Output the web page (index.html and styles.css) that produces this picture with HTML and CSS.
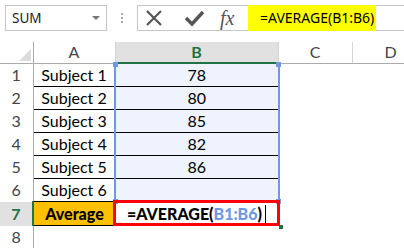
FILE: index.html
```html
<!DOCTYPE html>
<html lang="en">
<head>
    <meta charset="UTF-8">
    <title>Average formula</title>
    <link rel="stylesheet" href="styles.css">
</head>
<body>
    <div class="formula-bar">
        <div class="name-box">
            <span>SUM</span>
            <span class="drop"></span>
        </div>
        <div class="dots">
            <span></span><span></span><span></span>
        </div>
        <div class="edit-box">
            <div class="btns">
                <svg width="22" height="18" viewBox="0 0 22 18">
                    <path d="M4 2 L18 16 M18 2 L4 16" stroke="#555" stroke-width="2.2" fill="none"/>
                </svg>
                <svg width="22" height="18" viewBox="0 0 22 18">
                    <path d="M3 9 L9 15 L20 3" stroke="#555" stroke-width="3.4" fill="none"/>
                </svg>
                <span class="fx"><i>fx</i></span>
            </div>
            <div class="input"><span class="hl">=AVERAGE(B1:B6)</span></div>
        </div>
    </div>

    <div class="sheet">
        <table class="grid">
            <colgroup>
                <col class="c-hd">
                <col class="c-a">
                <col class="c-b">
                <col class="c-c">
                <col class="c-d">
            </colgroup>
            <tr class="col-heads">
                <th class="corner"><span class="tri"></span></th>
                <th>A</th>
                <th class="active-col">B</th>
                <th>C</th>
                <th class="cut">D</th>
            </tr>
            <tr><th class="rh">1</th><td class="lbl">Subject 1</td><td class="num">78</td><td></td><td></td></tr>
            <tr><th class="rh">2</th><td class="lbl">Subject 2</td><td class="num">80</td><td></td><td></td></tr>
            <tr><th class="rh">3</th><td class="lbl">Subject 3</td><td class="num">85</td><td></td><td></td></tr>
            <tr><th class="rh">4</th><td class="lbl">Subject 4</td><td class="num">82</td><td></td><td></td></tr>
            <tr><th class="rh">5</th><td class="lbl">Subject 5</td><td class="num">86</td><td></td><td></td></tr>
            <tr><th class="rh">6</th><td class="lbl">Subject 6</td><td class="num"></td><td></td><td></td></tr>
            <tr class="total">
                <th class="rh active-row">7</th>
                <td class="lbl avg">Average</td>
                <td class="edit">=AVERAGE(<span class="ref">B1:B6</span>)<span class="caret"></span></td>
                <td></td><td></td>
            </tr>
            <tr class="empty"><th class="rh">8</th><td></td><td></td><td></td><td></td></tr>
        </table>

        <div class="range">
            <span class="knob tl"></span>
            <span class="knob tr"></span>
            <span class="knob bl"></span>
            <span class="knob br"></span>
        </div>
        <div class="active-cell"><span class="fill"></span></div>
    </div>
</body>
</html>
```

FILE: styles.css
```css
body {
    margin: 0;
    width: 404px;
    height: 250px;
    overflow: hidden;
    background: #fff;
    font-family: Lato, "Open Sans", sans-serif;
    color: #000;
}
.formula-bar {
    display: flex;
    align-items: center;
    height: 26px;
    padding: 5px 0 0 5px;
}
.name-box {
    box-sizing: border-box;
    width: 102px;
    height: 26px;
    border: 1px solid #c6c6c6;
    display: flex;
    align-items: center;
    justify-content: space-between;
    padding: 0 6px 0 6px;
    font-family: "Noto Sans", sans-serif;
    font-size: 13.5px;
    color: #222;
}
.drop {
    width: 0;
    height: 0;
    border-left: 4px solid transparent;
    border-right: 4px solid transparent;
    border-top: 4px solid #777;
}
.dots {
    width: 30px;
    display: flex;
    flex-direction: column;
    align-items: center;
    gap: 2px;
}
.dots span {
    width: 2px;
    height: 2px;
    background: #aaa;
}
.edit-box {
    flex: 1;
    display: flex;
    height: 26px;
    box-sizing: border-box;
    border: 1px solid #c6c6c6;
    border-right: none;
}
.btns {
    width: 105px;
    display: flex;
    align-items: center;
    gap: 18px;
    padding-left: 5px;
}
.fx {
    font-family: "Liberation Serif", serif;
    font-size: 20px;
    color: #555;
    margin-left: -3px;
}
.input {
    display: flex;
}
.hl {
    background: #ffff00;
    width: 128px;
    margin: -1px 0;
    padding-left: 12px;
    box-sizing: border-box;
    line-height: 26px;
    font-family: "Noto Sans", sans-serif;
    font-size: 14px;
    white-space: nowrap;
}
.sheet {
    position: relative;
    margin-top: 11px;
}
.grid {
    border-collapse: collapse;
    table-layout: fixed;
    width: 404px;
}
.c-hd { width: 33px; }
.c-a { width: 82px; }
.c-b { width: 163px; }
.c-c { width: 74px; }
.c-d { width: 52px; }
.grid th,
.grid td {
    padding: 0;
    height: 22px;
    text-align: center;
    font-weight: normal;
    font-size: 16px;
    line-height: 22px;
}
.col-heads th {
    height: 20px;
    line-height: 20px;
    color: #444;
    border-bottom: 1px solid #ababab;
    border-right: 1px solid #d4d4d4;
}
.grid .col-heads th.cut {
    text-align: left;
    padding-left: 32px;
    border-right: none;
}
.col-heads th.corner {
    position: relative;
    border-right: 1px solid #ababab;
}
.tri {
    position: absolute;
    right: 2px;
    bottom: 2px;
    width: 0;
    height: 0;
    border-left: 12px solid transparent;
    border-bottom: 12px solid #dcdcdc;
}
.col-heads th.active-col {
    background: #e1e1e1;
    color: #217346;
    font-weight: bold;
    border-bottom: 2px solid #217346;
}
.rh {
    color: #444;
    border-right: 1px solid #ababab;
}
.rh.active-row {
    background: #e1e1e1;
    color: #217346;
    font-weight: bold;
    border-right: 2px solid #217346;
}
.lbl,
.num {
    border-bottom: 1px solid #000;
}
.num {
    background: #eff3fd;
    border-left: 1px solid #000;
}
.grid .avg {
    background: #ffc000;
    font-weight: 900;
    height: 23px;
}
.grid .edit {
    font-weight: 900;
    font-size: 16px;
    border-bottom: 1px solid #000;
    white-space: nowrap;
}
.ref {
    color: #6f98e5;
}
.caret {
    display: inline-block;
    width: 1px;
    height: 18px;
    background: #000;
    vertical-align: -3px;
    margin-left: 3px;
}
.range {
    position: absolute;
    left: 114px;
    top: 20px;
    width: 162px;
    height: 138px;
    border-left: 2px solid #6f98e5;
    border-right: 2px solid #6f98e5;
}
.knob {
    position: absolute;
    width: 5px;
    height: 5px;
    background: #6f98e5;
}
.knob.tl { left: -3px; top: 0; }
.knob.tr { right: -3px; top: 0; }
.knob.bl { left: -3px; bottom: -4px; }
.knob.br { right: -3px; bottom: -4px; }
.active-cell {
    position: absolute;
    left: 113px;
    top: 158px;
    width: 161px;
    height: 20px;
    border: 3px solid #ff0000;
}
.fill {
    position: absolute;
    right: -6px;
    bottom: -6px;
    width: 4px;
    height: 4px;
    background: #217346;
}
```
